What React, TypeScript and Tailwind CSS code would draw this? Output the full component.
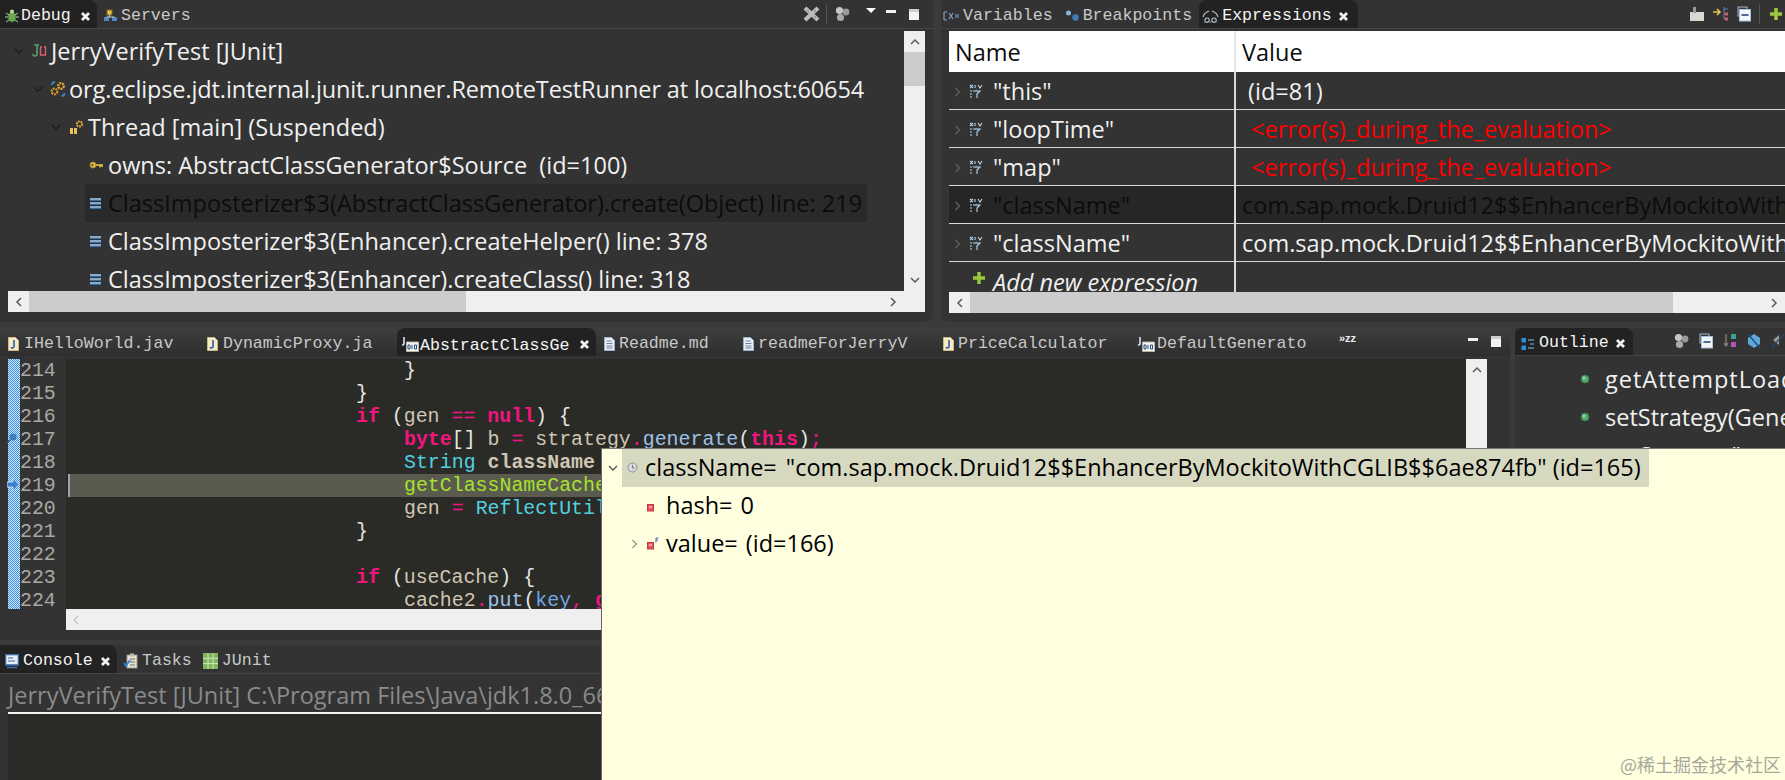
import type { ReactNode } from 'react'

const sans = 'font-["Open_Sans","Noto_Sans",sans-serif]'

// tiny eclipse style icons
const Chevron = ({ open, color = '#8a8a8a' }: { open?: boolean; color?: string }) => (
  <svg width="10" height="10" viewBox="0 0 10 10" className="shrink-0">
    <path d={open ? 'M1 3l4 4 4-4' : 'M3.5 1 7.5 5l-4 4'} fill="none" stroke={color} strokeWidth="1.4" />
  </svg>
)

const CloseX = () => (
  <svg width="11" height="11" viewBox="0 0 11 11" className="shrink-0">
    <path d="M2 2l7 7M9 2l-7 7" stroke="#f2f2f2" strokeWidth="2.8" />
  </svg>
)

const JavaFile = () => (
  <svg width="11" height="14" viewBox="0 0 11 14" className="shrink-0">
    <path d="M.5.5h7l3 3v10H.5z" fill="#f6e9c4" stroke="#c9b88a" />
    <path d="M6 3v6.5a1.6 1.6 0 0 1-3 .6" fill="none" stroke="#2a5fa8" strokeWidth="1.6" />
  </svg>
)

const TextFile = () => (
  <svg width="11" height="14" viewBox="0 0 11 14" className="shrink-0">
    <path d="M.5.5h7l3 3v10H.5z" fill="#e8eef6" stroke="#9fb0c6" />
    <path d="M2.5 4h5M2.5 6.5h6M2.5 9h6M2.5 11h6" stroke="#6b82a3" />
  </svg>
)

const ClassFile = () => (
  <svg width="18" height="16" viewBox="0 0 18 16" className="shrink-0">
    <path d="M3 1v7a2 2 0 0 1-2 1" fill="none" stroke="#d7e2ef" strokeWidth="1.6" />
    <path d="M5.5 6h12v9.5h-12z" fill="#f5f5f0" stroke="#b5b5a8" />
    <path d="M7 9h2v4H7zM11 9v4M13.5 9h2v4h-2z" fill="none" stroke="#234a7d" />
  </svg>
)

const Pale = ({ children, w = 14 }: { children: ReactNode; w?: number }) => (
  <svg width={w} height="14" viewBox={`0 0 ${w} 14`} className="shrink-0">{children}</svg>
)

const RowsIcon = () => (
  <Pale w={13}>
    <path d="M1 3h11M1 7h11M1 11h11" stroke="#a9d2f4" strokeWidth="1.4" />
    <path d="M1 4.5h11M1 8.5h11M1 12.5h11" stroke="#2f6fb2" strokeWidth="1.2" />
  </Pale>
)

const VarIcon = () => (
  <svg width="15" height="16" viewBox="0 0 15 16" className="shrink-0">
    <path d="M1 1l3 3M4 1L1 4M6 1v3M9 1l2 3 2-3M4 7h7l-3 3v4M1 7h2M1 10h2M1 13h2" fill="none" stroke="#b8d4e8" strokeWidth="1.1" />
    <circle cx="7.5" cy="7" r="1.3" fill="#6f9fc4" />
  </svg>
)

const Dot = () => (
  <svg width="10" height="10" viewBox="0 0 10 10" className="shrink-0">
    <circle cx="5" cy="5" r="4" fill="#57a86d" stroke="#2f7a4b" />
    <circle cx="4" cy="4" r="1.4" fill="#9bd4a8" />
  </svg>
)

const RedBox = ({ final }: { final?: boolean }) => (
  <svg width="14" height="14" viewBox="0 0 14 14" className="shrink-0">
    <rect x="1.5" y="5.5" width="6" height="6.5" fill="#e8545b" stroke="#c03a40" />
    <rect x="3" y="7" width="3" height="2" fill="#f5a0a3" />
    {final && <path d="M10 1v4.5M10 1h2.5M10 3h2" stroke="#2f5fa8" strokeWidth="0.9" fill="none" />}
  </svg>
)

const Gears = () => (
  <svg width="16" height="17" viewBox="0 0 16 17" className="shrink-0">
    <circle cx="11" cy="5" r="2.8" fill="#3a3322" stroke="#e0ad3c" strokeWidth="2.2" strokeDasharray="2 0.8" />
    <circle cx="4.5" cy="10.5" r="2.8" fill="#3a3322" stroke="#d9982f" strokeWidth="2.2" strokeDasharray="2 0.8" />
    <path d="M2 4a3 3 0 0 1 3-3M14.5 12a3 3 0 0 1-3 3" fill="none" stroke="#3f7fc6" strokeWidth="1.8" />
  </svg>
)

const Thread = () => (
  <svg width="15" height="16" viewBox="0 0 15 16" className="shrink-0">
    <circle cx="10.5" cy="5" r="2.6" fill="#3a3322" stroke="#e0ad3c" strokeWidth="2" strokeDasharray="1.8 0.8" />
    <rect x="1" y="9" width="3" height="6" fill="#e8c25a" />
    <rect x="5" y="9" width="3" height="6" fill="#e8c25a" />
  </svg>
)

const Key = () => (
  <svg width="15" height="10" viewBox="0 0 15 10" className="shrink-0">
    <circle cx="4" cy="5" r="3" fill="#e8c24a" stroke="#a98a2a" />
    <circle cx="3.4" cy="5" r="1" fill="#333" />
    <path d="M7 5h7M11 5v2.5M13 5v2" stroke="#e8c24a" strokeWidth="1.5" />
  </svg>
)

const Junit = () => (
  <svg width="15" height="14" viewBox="0 0 15 14" className="shrink-0">
    <path d="M2 1h5M5 1v9a2 2 0 0 1-4 0" fill="none" stroke="#56a06f" strokeWidth="1.6" />
    <path d="M8.5 3v8h5V3M8 3h2M12 3h2" fill="none" stroke="#e0606c" strokeWidth="1.4" />
  </svg>
)

const Bug = () => (
  <svg width="14" height="16" viewBox="0 0 14 16" className="shrink-0">
    <ellipse cx="7" cy="9" rx="4" ry="5" fill="#6fa84f" stroke="#3c6e3a" />
    <circle cx="7" cy="3.5" r="2" fill="#bcd9a0" />
    <path d="M1 5l3 2M13 5l-3 2M0 9h3M14 9h-3M1 14l3-2M13 14l-3-2" stroke="#a8c8a0" strokeWidth="1" />
  </svg>
)

const Servers = () => (
  <svg width="15" height="14" viewBox="0 0 15 14" className="shrink-0">
    <rect x="4" y="1" width="5" height="5" fill="#e8c24a" stroke="#7a6a2a" />
    <rect x="1" y="8" width="5" height="4" fill="#4f86c6" />
    <rect x="9" y="8" width="5" height="4" fill="#4f86c6" />
    <path d="M6.5 6v2M3.5 8h8" stroke="#c9d2dc" />
  </svg>
)

const VarTab = () => (
  <Pale w={17}>
    <path d="M1 3v8M1 3l3 0M1 11h3M6 4l4 6M10 4l-4 6M12 6h4M12 8h4" fill="none" stroke="#7da7d0" strokeWidth="1.1" />
  </Pale>
)

const BreakTab = () => (
  <Pale w={15}>
    <circle cx="3.5" cy="4" r="2.5" fill="#8ab6dc" />
    <circle cx="10.5" cy="8.5" r="3.2" fill="#3d7fb8" />
  </Pale>
)

const ExprTab = () => (
  <Pale w={17}>
    <path d="M1 8c1-4 4-5 6-6M16 8c-1-4-4-5-6-6M5 9a2.2 2.2 0 1 0 .1 0M12 9a2.2 2.2 0 1 0 .1 0" fill="none" stroke="#b9c4cf" strokeWidth="1.1" />
    <path d="M2 13h2M7 13h3M13 13h2" stroke="#7f8b96" />
  </Pale>
)

const OutlineTab = () => (
  <Pale w={14}>
    <rect x="0.5" y="1" width="4.5" height="4.5" fill="#2b8fd6" />
    <rect x="0.5" y="8.5" width="4.5" height="4.5" fill="#2b8fd6" />
    <path d="M7 3h6M9 7h4M7 11h6" stroke="#8ab6dc" strokeWidth="1.2" />
  </Pale>
)

const ConsoleTab = () => (
  <svg width="14" height="15" viewBox="0 0 14 15" className="shrink-0">
    <rect x="0.5" y="0.5" width="13" height="10.5" fill="#e6edf5" stroke="#3b6aa6" strokeWidth="1.6" />
    <path d="M3 4h5M3 7h7" stroke="#3b6aa6" />
    <path d="M2 13.5h10" stroke="#3b6aa6" strokeWidth="1.6" />
  </svg>
)

const TasksTab = () => (
  <svg width="15" height="16" viewBox="0 0 15 16" className="shrink-0">
    <rect x="4" y="2" width="10" height="13" fill="#e8e4d4" stroke="#9a9a8a" />
    <rect x="7" y="0.5" width="4" height="3" fill="#b9b9a9" />
    <path d="M7 6h5M7 9h5M7 12h5" stroke="#6a6a6a" />
    <path d="M1 10l2 3 4-6" fill="none" stroke="#2f7fe0" strokeWidth="1.6" />
  </svg>
)

const GridTab = () => (
  <svg width="15" height="16" viewBox="0 0 15 16" className="shrink-0">
    <rect width="15" height="16" fill="#7fb65f" />
    <path d="M5 0v16M10 0v16M0 5.3h15M0 10.6h15" stroke="#cfe6b8" />
  </svg>
)

const Tb = ({ children, w = 16 }: { children: ReactNode; w?: number }) => (
  <svg width={w} height="16" viewBox={`0 0 ${w} 16`} className="shrink-0">{children}</svg>
)

const Disconnect = () => (
  <Tb w={17}>
    <path d="M2 2l13 12M15 2L2 14" stroke="#bdbdbd" strokeWidth="4.2" />
    <path d="M4 4l2 2M11 10l2 2M13 4l-2 2" stroke="#8f8f8f" strokeWidth="1.4" />
  </Tb>
)

// three grey balls
const Grouped = () => (
  <Tb w={15}>
    <circle cx="4.5" cy="4.5" r="3.6" fill="#c8c8c8" />
    <circle cx="11" cy="6" r="3.4" fill="#9a9a9a" />
    <circle cx="5.5" cy="11.5" r="3.6" fill="#ababab" />
  </Tb>
)

const Collapse = () => (
  <Tb w={14}>
    <rect x="1" y="1" width="9" height="9" fill="#3a3a3a" stroke="#9fb8d0" />
    <rect x="2.5" y="3.5" width="11" height="11.5" fill="#f1f4f8" stroke="#a9c2da" />
    <path d="M4.5 9h7" stroke="#234a7d" strokeWidth="1.6" />
  </Tb>
)

const Minimize = () => <div className="h-[3px] w-[10px] bg-[#f0f0f0]" />
const Maximize = () => <div className="h-[11px] w-[10px] border-t-[3px] border-t-[#cfcfcf] bg-[#f4f4f4]" />

const ArrowUp = () => (
  <svg width="10" height="7" viewBox="0 0 10 7"><path d="M1 6l4-4 4 4" fill="none" stroke="#5a5a5a" strokeWidth="1.5" /></svg>
)
const ArrowDown = () => (
  <svg width="10" height="7" viewBox="0 0 10 7"><path d="M1 1l4 4 4-4" fill="none" stroke="#5a5a5a" strokeWidth="1.5" /></svg>
)
const ArrowLeft = ({ dim }: { dim?: boolean }) => (
  <svg width="7" height="10" viewBox="0 0 7 10"><path d="M6 1L2 5l4 4" fill="none" stroke={dim ? '#c8c8c8' : '#5a5a5a'} strokeWidth="1.5" /></svg>
)
const ArrowRight = () => (
  <svg width="7" height="10" viewBox="0 0 7 10"><path d="M1 1l4 4-4 4" fill="none" stroke="#5a5a5a" strokeWidth="1.5" /></svg>
)

const TabLabel = ({ children, dim }: { children: ReactNode; dim?: boolean }) => (
  <span className={`font-["Liberation_Mono",monospace] text-[16.6px] leading-none whitespace-nowrap ${dim ? 'text-[#c8c8c8]' : 'text-[#f4f4f4]'}`}>
    {children}
  </span>
)

const treeRows = [
  { pad: 'pl-[6px]', chev: 'mr-[8px]', icon: <Junit />, label: 'JerryVerifyTest [JUnit]', text: '' },
  { pad: 'pl-[25px]', chev: 'mr-[7px]', icon: <Gears />, label: 'org.eclipse.jdt.internal.junit.runner.RemoteTestRunner at localhost:60654', text: 'tracking-[-0.12px]' },
  { pad: 'pl-[43px]', chev: 'mr-[8px]', icon: <Thread />, label: 'Thread [main] (Suspended)', text: '' },
  { pad: 'ml-[77px] pl-[4px]', icon: <Key />, label: 'owns: AbstractClassGenerator$Source  (id=100)', text: '' },
  { pad: 'ml-[77px] pl-[4px]', icon: <RowsIcon />, label: 'ClassImposterizer$3(AbstractClassGenerator).create(Object) line: 219', sel: true, text: 'text-[#0c0c0c]' },
  { pad: 'ml-[77px] pl-[4px]', icon: <RowsIcon />, label: 'ClassImposterizer$3(Enhancer).createHelper() line: 378', text: '' },
  { pad: 'ml-[77px] pl-[4px]', icon: <RowsIcon />, label: 'ClassImposterizer$3(Enhancer).createClass() line: 318', text: '' },
]

const exprRows = [
  { name: '"this"', value: ' (id=81)', kind: 'plain' },
  { name: '"loopTime"', value: ' <error(s)_during_the_evaluation>', kind: 'err' },
  { name: '"map"', value: ' <error(s)_during_the_evaluation>', kind: 'err' },
  { name: '"className"', value: 'com.sap.mock.Druid12$$EnhancerByMockitoWithCGLIB$$6ae874fb', kind: 'sel' },
  { name: '"className"', value: 'com.sap.mock.Druid12$$EnhancerByMockitoWithCGLIB$$6ae874fb', kind: 'plain' },
]

const outlineRows = [
  { label: 'getAttemptLoad()', text: 'tracking-[1px]' },
  { label: 'setStrategy(GeneratorStrategy)', text: '' },
  { label: 'getStrategy()', text: '' },
]

const kw = 'text-[#f0157f] font-bold'
const cls = 'text-[#52d0e0]'
const fn = 'text-[#9fc0e8]'
const vr = 'text-[#cfc6b4]'
const pn = 'text-[#e6e6e6]'
const op = 'text-[#f0157f]'

const codeLines: { no: number; indent: string; hl?: boolean; code: ReactNode }[] = [
  { no: 214, indent: 'pl-[336px]', code: <span className={pn}>{'}'}</span> },
  { no: 215, indent: 'pl-[288px]', code: <span className={pn}>{'}'}</span> },
  {
    no: 216,
    indent: 'pl-[288px]',
    code: (
      <>
        <span className={kw}>if</span> <span className={pn}>(</span><span className={vr}>gen</span> <span className={op}>==</span> <span className={kw}>null</span><span className={pn}>) {'{'}</span>
      </>
    ),
  },
  {
    no: 217,
    indent: 'pl-[336px]',
    code: (
      <>
        <span className={kw}>byte</span><span className={pn}>[]</span> <span className={vr}>b</span> <span className={op}>=</span> <span className={vr}>strategy</span><span className={op}>.</span><span className={fn}>generate</span><span className={pn}>(</span><span className={kw}>this</span><span className={pn}>)</span><span className={op}>;</span>
      </>
    ),
  },
  { no: 218, indent: 'pl-[336px]', code: <><span className={cls}>String</span> <span className={`${vr} font-bold`}>className</span></> },
  { no: 219, indent: 'pl-[334px]', hl: true, code: <span className="text-[#a6e22e]">getClassNameCache(</span> },
  { no: 220, indent: 'pl-[336px]', code: <><span className={vr}>gen</span> <span className={op}>=</span> <span className={cls}>ReflectUtils</span></> },
  { no: 221, indent: 'pl-[288px]', code: <span className={pn}>{'}'}</span> },
  { no: 222, indent: 'pl-[288px]', code: <span>&nbsp;</span> },
  {
    no: 223,
    indent: 'pl-[288px]',
    code: (
      <>
        <span className={kw}>if</span> <span className={pn}>(</span><span className={vr}>useCache</span><span className={pn}>) {'{'}</span>
      </>
    ),
  },
  {
    no: 224,
    indent: 'pl-[336px]',
    code: (
      <>
        <span className={vr}>cache2</span><span className={op}>.</span><span className={fn}>put</span><span className={pn}>(</span><span className="text-[#6fa8e8]">key</span><span className={op}>,</span> <span className={kw}>gen</span>
      </>
    ),
  },
]

const editorTabs = [
  { icon: <JavaFile />, label: 'IHelloWorld.jav', cls: 'w-[203px] pl-[8px] gap-[5px]' },
  { icon: <JavaFile />, label: 'DynamicProxy.ja', cls: 'w-[194px] pl-[4px] gap-[5px]' },
]

export default function App() {
  return (
    <div className={`relative flex h-[780px] w-[1785px] flex-col overflow-hidden bg-[#3b3b3b] ${sans}`}>
      {/* top row */}
      <div className="flex h-[322px] shrink-0 gap-[8px]">
        {/* debug view */}
        <div className="flex w-[933px] shrink-0 flex-col rounded-br-lg bg-[#333333]">
          <div className="flex h-[29px] shrink-0 items-stretch border-b border-b-[#444444]">
            <div className="flex w-[97px] items-center gap-[2px] rounded-tr-lg bg-[#222222] pl-[5px] pt-[4px]">
              <Bug />
              <TabLabel>Debug</TabLabel>
              <span className="ml-[7px]"><CloseX /></span>
            </div>
            <div className="ml-[6px] flex items-center gap-[3px] pt-[4px]">
              <Servers />
              <TabLabel dim>Servers</TabLabel>
            </div>
            <div className="ml-auto flex items-center pr-[14px]">
              <Disconnect />
              <div className="ml-[6px] h-[20px] w-px bg-[#555555]" />
              <span className="ml-[8px]"><Grouped /></span>
              <div className="ml-[16px] mb-[8px] h-0 w-0 border-x-[5px] border-t-[5px] border-x-transparent border-t-white" />
              <span className="ml-[10px] mb-[6px]"><Minimize /></span>
              <span className="ml-[13px]"><Maximize /></span>
            </div>
          </div>
          <div className="ml-[8px] mt-[2px] mr-[8px] flex w-[917px] flex-col">
            <div className="flex h-[260px]">
              <div className="w-[896px] overflow-hidden pt-[1px] text-[23.5px] leading-[38px] text-[#f0f0f0]">
                {treeRows.map(row => (
                  <div key={row.label} className={`flex h-[38px] w-max min-w-[782px] items-center whitespace-pre ${row.pad} ${row.sel ? 'bg-[#2a2a2a]' : ''}`}>
                    {row.chev && <span className={row.chev}><Chevron open color="#1c1c1c" /></span>}
                    <span className="flex w-[19px] shrink-0 items-center">{row.icon}</span>
                    <span className={row.text}>{row.label}</span>
                  </div>
                ))}
              </div>
              <div className="flex w-[21px] shrink-0 flex-col items-center bg-[#efefef]">
                <div className="flex h-[21px] items-center"><ArrowUp /></div>
                <div className="h-[34px] w-full bg-[#cccccc]" />
                <div className="flex-1" />
                <div className="flex h-[21px] items-center"><ArrowDown /></div>
              </div>
            </div>
            <div className="flex h-[21px] items-center bg-[#efefef]">
              <div className="flex h-full w-[21px] items-center justify-center"><ArrowLeft /></div>
              <div className="h-full w-[437px] bg-[#cccccc]" />
              <div className="flex-1" />
              <div className="mr-[21px] flex h-full w-[21px] items-center justify-center"><ArrowRight /></div>
            </div>
          </div>
        </div>

        {/* expressions view */}
        <div className="flex min-w-0 flex-1 flex-col rounded-bl-lg bg-[#333333]">
          <div className="flex h-[29px] shrink-0 items-stretch border-b border-b-[#444444]">
            <div className="ml-[2px] flex items-center gap-[3px] pt-[4px]">
              <VarTab />
              <TabLabel dim>Variables</TabLabel>
            </div>
            <div className="ml-[12px] flex items-center gap-[3px] pt-[4px]">
              <BreakTab />
              <TabLabel dim>Breakpoints</TabLabel>
            </div>
            <div className="ml-[7px] flex w-[159px] items-center gap-[3px] rounded-t-lg bg-[#222222] pl-[3px] pt-[4px]">
              <ExprTab />
              <TabLabel>Expressions</TabLabel>
              <span className="ml-[3px]"><CloseX /></span>
            </div>
            <div className="ml-auto flex items-center gap-[8px] pr-[1px]">
              <Tb>
                <path d="M1 6h14v9H1z" fill="#d8d8d0" />
                <path d="M4 1h3v6H4z" fill="#9a9a9a" />
              </Tb>
              <Tb>
                <path d="M0 6h7M4 3l3 3-3 3" fill="none" stroke="#e8c24a" strokeWidth="1.6" />
                <path d="M11 1v12M11 3h4M11 8h4M11 13h4" fill="none" stroke="#5a8ab8" strokeWidth="1" />
                <rect x="12" y="6.5" width="3" height="3" fill="#d65a64" />
                <rect x="12" y="11.5" width="3" height="3" fill="#d65a64" />
              </Tb>
              <Collapse />
              <div className="h-[20px] w-px bg-[#555555]" />
              <Tb>
                <path d="M8 2v12M2 8h12" stroke="#9ac93f" strokeWidth="3.6" />
              </Tb>
            </div>
          </div>
          <div className="ml-[8px] mt-[2px] flex min-w-0 flex-col text-[23.5px] text-[#f0f0f0]">
            <div className="flex h-[41px] items-center bg-white text-[#0b0b0b]">
              <div className="flex h-full w-[287px] shrink-0 items-center border-r-2 border-r-[#e6e6e6] pl-[6px] pt-[2px]">Name</div>
              <div className="pl-[6px] pt-[2px]">Value</div>
            </div>
            {exprRows.map((row, i) => (
              <div
                key={i}
                className={`flex h-[38px] items-center border-b border-b-[#d8d8d8] ${row.kind === 'sel' ? 'bg-[#262626] text-[#0c0c0c]' : ''}`}
              >
                <div className="flex h-full w-[287px] shrink-0 items-center border-r-2 border-r-[#d8d8d8] pl-[3px] pt-[2px]">
                  <Chevron color="#5f5f5f" />
                  <span className="ml-[7px] mr-[9px]"><VarIcon /></span>
                  <span>{row.name}</span>
                </div>
                <div className={`whitespace-pre pt-[2px] ${row.kind === 'err' ? 'pl-[9px] text-[#ff0000]' : 'pl-[6px]'}`}>{row.value}</div>
              </div>
            ))}
            <div className="flex h-[30px] overflow-hidden">
              <div className="flex h-full w-[287px] shrink-0 items-start border-r-2 border-r-[#d8d8d8] pl-[23px] pt-[1px]">
                <svg width="14" height="14" viewBox="0 0 14 14" className="mt-[8px] mr-[7px] shrink-0">
                  <path d="M7 1v12M1 7h12" stroke="#9ac93f" strokeWidth="3.4" />
                </svg>
                <span className="italic leading-[38px] whitespace-nowrap">Add new expression</span>
              </div>
            </div>
            <div className="flex h-[21px] items-center bg-[#efefef]">
              <div className="flex h-full w-[21px] items-center justify-center"><ArrowLeft /></div>
              <div className="h-full w-[703px] bg-[#cccccc]" />
              <div className="flex-1" />
              <div className="flex h-full w-[21px] items-center justify-center"><ArrowRight /></div>
            </div>
          </div>
        </div>
      </div>

      <div className="h-[6px] shrink-0" />

      {/* middle row */}
      <div className="flex h-[312px] shrink-0 gap-[5px]">
        <div className="flex w-[1510px] shrink-0 flex-col rounded-tr-lg rounded-br-lg bg-[#333333]">
          <div className="flex h-[28px] shrink-0 items-stretch bg-gradient-to-b from-[#3e3e3e] to-[#2e2e2e]">
            {editorTabs.map(tab => (
              <div key={tab.label} className={`flex items-center pt-[4px] ${tab.cls}`}>
                {tab.icon}
                <TabLabel dim>{tab.label}</TabLabel>
              </div>
            ))}
            <div className="flex w-[199px] items-center rounded-t-lg bg-[#222222] pl-[4px] pt-[4px]">
              <ClassFile />
              <span className="ml-[1px]"><TabLabel>AbstractClassGe</TabLabel></span>
              <span className="ml-[10px]"><CloseX /></span>
            </div>
            <div className="ml-[8px] flex w-[139px] items-center gap-[4px] pt-[4px]">
              <TextFile />
              <TabLabel dim>Readme.md</TabLabel>
            </div>
            <div className="flex w-[200px] items-center gap-[4px] pt-[4px]">
              <TextFile />
              <TabLabel dim>readmeForJerryV</TabLabel>
            </div>
            <div className="flex w-[194px] items-center gap-[4px] pt-[4px]">
              <JavaFile />
              <TabLabel dim>PriceCalculator</TabLabel>
            </div>
            <div className="flex w-[196px] items-center gap-[2px] pt-[4px]">
              <ClassFile />
              <TabLabel dim>DefaultGenerato</TabLabel>
            </div>
            <div className="flex w-[50px] items-start pl-[6px] pt-[5px]">
              <span className="font-['Liberation_Sans',sans-serif] text-[11px] font-bold leading-none text-[#f0f0f0]">»zz</span>
            </div>
            <div className="ml-auto flex items-center pr-[9px]">
              <span className="mb-[6px]"><Minimize /></span>
              <span className="ml-[13px] mb-[2px]"><Maximize /></span>
            </div>
          </div>
          <div className="mt-[3px] flex h-[250px] shrink-0">
            <div className="w-[8px] shrink-0" />
            <div className="relative w-[12px] shrink-0 bg-[repeating-conic-gradient(#3f93e6_0_25%,#cfe3f7_0_50%)] bg-[length:2px_2px]">
              <svg width="12" height="12" viewBox="0 0 12 12" className="absolute left-[-2px] top-[73px]">
                <circle cx="7" cy="5" r="3.5" fill="#3d7fb8" />
                <path d="M1 11l3-3" stroke="#2a5a88" strokeWidth="1.4" />
              </svg>
              <svg width="13" height="13" viewBox="0 0 13 13" className="absolute left-[-1px] top-[119px]">
                <path d="M0 4h6V0l6 6.5L6 13V9H0z" fill="#3d7fd0" stroke="#dfe9f5" strokeWidth="0.8" />
              </svg>
            </div>
            <div className="w-[46px] shrink-0 font-['Liberation_Mono',monospace] text-[19.9px] leading-[23px] text-[#a9a9a0]">
              {codeLines.map(line => (
                <div key={line.no}>{line.no}</div>
              ))}
            </div>
            <div className="min-w-0 flex-1 overflow-hidden bg-[#2a2b26] pl-[2px] font-['Liberation_Mono',monospace] text-[19.9px] leading-[23px] whitespace-pre">
              {codeLines.map(line => (
                <div key={line.no} className={`${line.indent} ${line.hl ? 'border-l-2 border-l-[#a29fb3] bg-[#5a5a4e]' : ''}`}>
                  {line.code}
                </div>
              ))}
            </div>
            <div className="flex w-[21px] shrink-0 flex-col items-center bg-[#efefef]">
              <div className="flex h-[21px] items-center"><ArrowUp /></div>
            </div>
            <div className="w-[23px] shrink-0" />
          </div>
          <div className="ml-[66px] mr-[23px] flex h-[21px] shrink-0 items-center bg-[#efefef] pl-[6px]">
            <ArrowLeft dim />
          </div>
        </div>

        {/* outline */}
        <div className="flex min-w-0 flex-1 flex-col bg-[#333333]">
          <div className="flex h-[28px] shrink-0 items-stretch border-b border-b-[#444444]">
            <div className="flex w-[118px] items-center gap-[4px] rounded-t-lg bg-[#222222] pl-[6px] pt-[4px]">
              <OutlineTab />
              <TabLabel>Outline</TabLabel>
              <span className="ml-[2px]"><CloseX /></span>
            </div>
            <div className="ml-auto flex items-center gap-[10px] pb-[2px]">
              <Grouped />
              <Collapse />
              <Tb w={14}>
                <path d="M3 1v12M1 10l2 3 2-3" fill="none" stroke="#8a8a8a" strokeWidth="1.2" />
                <path d="M8 1h5v5H8z" fill="#3aa08f" />
                <path d="M8 9h5v5H8z" fill="#b056b0" />
              </Tb>
              <Tb w={14}>
                <path d="M1 5l6-4 6 4v6l-6 4-6-4z" fill="#5ea8d8" />
                <path d="M1 1l12 14" stroke="#234a7d" strokeWidth="1.3" />
              </Tb>
              <Tb w={14}>
                <path d="M2 7l6-5v10z" fill="#9a9a9a" />
                <path d="M1 14L13 1" stroke="#234a7d" strokeWidth="1.3" />
              </Tb>
            </div>
          </div>
          <div className="flex flex-col pt-[4px] text-[23.5px] leading-[38px] text-[#f0f0f0]">
            {outlineRows.map(row => (
              <div key={row.label} className="flex h-[38px] items-center whitespace-nowrap pl-[65px]">
                <Dot />
                <span className={`ml-[15px] ${row.text}`}>{row.label}</span>
              </div>
            ))}
          </div>
        </div>
      </div>

      <div className="h-[5px] shrink-0" />

      {/* console */}
      <div className="flex min-h-0 flex-1 flex-col bg-[#333333]">
        <div className="flex h-[29px] shrink-0 items-stretch border-b border-b-[#444444]">
          <div className="flex w-[117px] items-center gap-[4px] rounded-tr-lg bg-[#222222] pl-[5px] pt-[4px]">
            <ConsoleTab />
            <TabLabel>Console</TabLabel>
            <span className="ml-[3px]"><CloseX /></span>
          </div>
          <div className="ml-[6px] flex items-center gap-[4px] pt-[4px]">
            <TasksTab />
            <TabLabel dim>Tasks</TabLabel>
          </div>
          <div className="ml-[11px] flex items-center gap-[4px] pt-[4px]">
            <GridTab />
            <TabLabel dim>JUnit</TabLabel>
          </div>
        </div>
        <div className="ml-[8px] flex min-h-0 flex-1 flex-col">
          <div className="flex h-[40px] shrink-0 items-center whitespace-pre border-b-2 border-b-[#f4f4f4] pt-[6px] text-[23.5px] text-[#8a8a8a]">
            JerryVerifyTest [JUnit] C:\Program Files\Java\jdk1.8.0_66\bin\javaw.exe
          </div>
          <div className="flex-1 bg-[#2a2b26]" />
        </div>
      </div>

      {/* hover popup */}
      <div className="absolute bottom-0 left-[601px] right-0 top-[448px] border-l border-t border-l-[#666666] border-t-[#777777] bg-[#ffffe0] text-[23.5px] text-black">
        <div className="flex h-[38px] items-center">
          <span className="flex w-[20px] shrink-0 pl-[6px]"><Chevron open color="#555555" /></span>
          <div className="flex h-full w-[1027px] items-center bg-[#d7d8c0]">
            <svg width="12" height="12" viewBox="0 0 12 12" className="ml-[5px] shrink-0">
              <circle cx="5.5" cy="5.5" r="4.5" fill="#d9d9e0" stroke="#8f8f98" />
              <path d="M5.5 3v3h2" stroke="#7a7a82" fill="none" />
            </svg>
            <span className="ml-[6px] whitespace-pre">className=</span>
            <span className="ml-[9px] whitespace-pre">"com.sap.mock.Druid12$$EnhancerByMockitoWithCGLIB$$6ae874fb" (id=165)</span>
          </div>
        </div>
        <div className="flex h-[38px] items-center pl-[44px]">
          <RedBox />
          <span className="ml-[6px] whitespace-pre">hash=</span>
          <span className="ml-[8px]">0</span>
        </div>
        <div className="flex h-[38px] items-center pl-[27px]">
          <Chevron color="#9a9a8a" />
          <span className="ml-[7px]"><RedBox final /></span>
          <span className="ml-[6px] whitespace-pre">value=</span>
          <span className="ml-[8px]">(id=166)</span>
        </div>
      </div>

      {/* site watermark */}
      <div className="absolute bottom-[7px] right-[4px] font-['Noto_Sans_CJK_SC',sans-serif] text-[18px] leading-none text-[#a8a89a]">
        @稀土掘金技术社区
      </div>
    </div>
  )
}
